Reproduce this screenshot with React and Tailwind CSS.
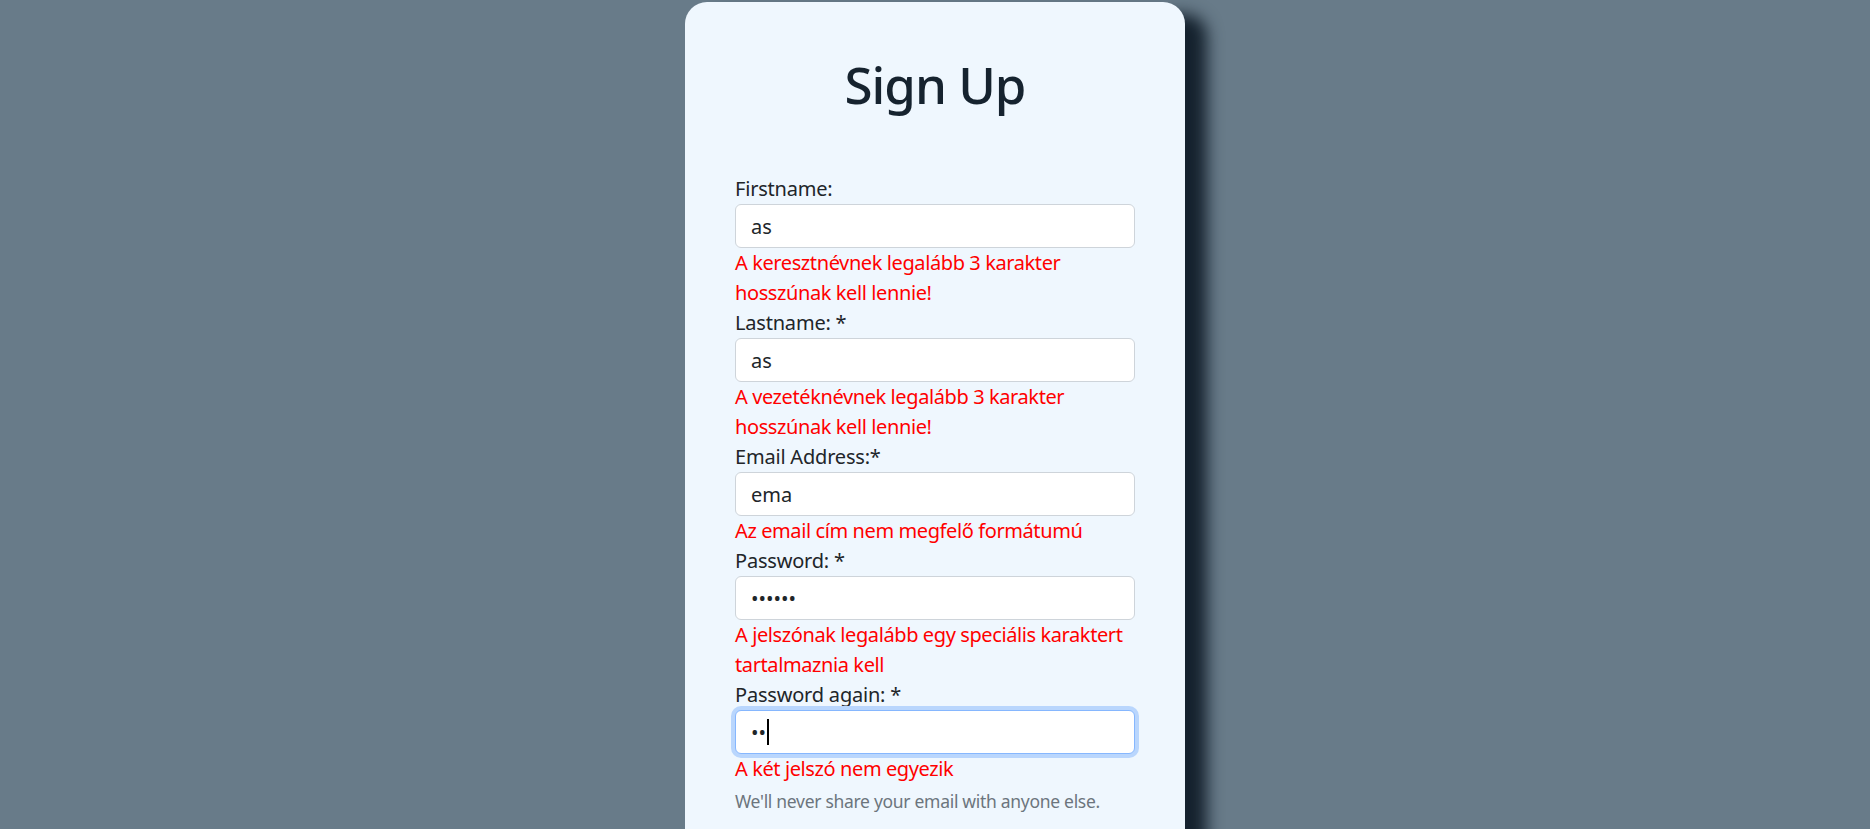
import React from "react";

const font = { fontFamily: '"Noto Sans", "Open Sans", sans-serif' };

function Field({ label, value, type = "text", errors = [], focused = false }) {
  return (
    <div className="flex flex-col">
      <label className="text-[20px] leading-[30px] text-[#212529] tracking-[-0.2px]">{label}</label>
      <div className="relative">
        <input
          type={type}
          defaultValue={value}
          readOnly
          className={
            "block w-full h-[44px] rounded-[6px] bg-white px-[15px] text-[20px] leading-[30px] text-[#212529] outline-none border " +
            (focused
              ? "border-[#86b7fe] shadow-[0_0_0_4px_#b9d6fd]"
              : "border-[#ced4da]")
          }
          style={font}
        />
        {focused && (
          <span className="absolute left-[32px] top-[9px] h-[26px] w-[1.5px] bg-black" />
        )}
      </div>
      {errors.map((e, i) => (
        <div
          key={i}
          className="whitespace-nowrap text-[20px] leading-[30px] text-[#ff0000] tracking-[-0.4px]"
        >
          {e}
        </div>
      ))}
    </div>
  );
}

export default function App() {
  return (
    <div
      className="h-screen w-full overflow-hidden bg-[#687b89] flex justify-center"
      style={font}
    >
      <div className="mt-[2px] w-[500px] h-[900px] shrink-0 rounded-[22px] bg-[#eff7fe] px-[50px] pt-[51px] shadow-[22px_12px_16px_#15222e]">
        <h1 className="text-center text-[51px] leading-[62px] font-medium tracking-[-1px] text-[#16232f]">
          Sign Up
        </h1>
        <form className="mt-[59px] flex flex-col">
          <Field
            label="Firstname:"
            value="as"
            errors={["A keresztnévnek legalább 3 karakter", "hosszúnak kell lennie!"]}
          />
          <Field
            label="Lastname: *"
            value="as"
            errors={["A vezetéknévnek legalább 3 karakter", "hosszúnak kell lennie!"]}
          />
          <Field
            label="Email Address:*"
            value="ema"
            errors={["Az email cím nem megfelő formátumú"]}
          />
          <Field
            label="Password: *"
            value="123456"
            type="password"
            errors={["A jelszónak legalább egy speciális karaktert", "tartalmaznia kell"]}
          />
          <Field
            label="Password again: *"
            value="12"
            type="password"
            focused
            errors={["A két jelszó nem egyezik"]}
          />
          <p className="mt-[4px] whitespace-nowrap text-[17.5px] leading-[26px] tracking-[-0.3px] text-[#6c757d]">
            We'll never share your email with anyone else.
          </p>
        </form>
      </div>
    </div>
  );
}
